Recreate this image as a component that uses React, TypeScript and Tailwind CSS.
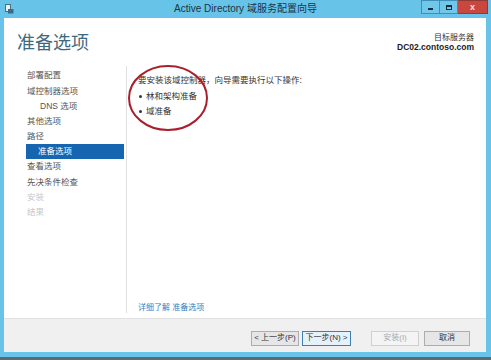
import React from "react";

const navItems: { label: string; indent?: boolean; selected?: boolean; disabled?: boolean }[] = [
  { label: "部署配置" },
  { label: "域控制器选项" },
  { label: "DNS 选项", indent: true },
  { label: "其他选项" },
  { label: "路径" },
  { label: "准备选项", selected: true },
  { label: "查看选项" },
  { label: "先决条件检查" },
  { label: "安装", disabled: true },
  { label: "结果", disabled: true },
];

export default function App() {
  const font = { fontFamily: '"Liberation Sans", "Noto Sans CJK SC", sans-serif' };
  return (
    <div className="w-[491px] h-[360px] bg-[#67c3e8] flex flex-col overflow-hidden" style={font}>
      {/* Title bar */}
      <div className="relative h-[18px] shrink-0 flex items-center justify-center">
        <div className="absolute left-[5px] top-[4px] w-[9px] h-[10px]">
          <svg width="9" height="10" viewBox="0 0 9 10">
            <rect x="0.5" y="0.5" width="5" height="7" fill="#e8f4fa" stroke="#4a6f85" strokeWidth="1" />
            <rect x="3" y="5" width="5.5" height="4.5" fill="#3f6a85" />
          </svg>
        </div>
        <span className="text-[10px] text-[#1b3446] leading-none">Active Directory 域服务配置向导</span>
        <div className="absolute right-[3px] top-0 flex h-[14px]">
          <div className="w-[19px] h-[14px] bg-[#6fc7eb] border border-[#3d8fb4] flex items-end justify-center pb-[3px]">
            <div className="w-[5px] h-[2px] bg-[#1c2b36]" />
          </div>
          <div className="w-[18px] h-[14px] bg-[#6fc7eb] border-y border-r border-[#3d8fb4] flex items-center justify-center">
            <div className="w-[6px] h-[5px] border border-[#1c2b36] border-t-2" />
          </div>
          <div className="w-[30px] h-[14px] bg-[#c9473f] border-y border-r border-[#8e3a36] flex items-center justify-center">
            <span className="text-[9px] font-bold text-[#f6e3e0] leading-none">x</span>
          </div>
        </div>
      </div>

      {/* Body */}
      <div className="flex-1 flex flex-col ml-[4px] mr-[5px] bg-white">
        <div className="h-[300px] flex flex-col">
          {/* Header */}
          <div className="flex justify-between items-start px-[13px] pt-[14px] h-[50px]">
            <div className="text-[18px] text-[#3f6a7e] leading-none mt-[2px]">准备选项</div>
            <div className="flex flex-col items-end mr-[-1px] mt-[1px]">
              <span className="text-[8px] text-[#333] leading-[9px]">目标服务器</span>
              <span className="text-[8.5px] font-bold text-[#222] leading-[10px]">DC02.contoso.com</span>
            </div>
          </div>
          <div className="flex flex-1">
            {/* Nav */}
            <div className="w-[122px] shrink-0 flex flex-col pl-[22px] mb-[5px]">
              <div className="flex flex-col">
                {navItems.map((it) => (
                  <div
                    key={it.label}
                    className={`h-[15.2px] flex items-center text-[8.5px] leading-none ${
                      it.indent ? "pl-[14px]" : "pl-[1px]"
                    } ${
                      it.selected
                        ? "bg-[#1565b0] text-white pl-[12px] mr-[2px]"
                        : it.disabled
                        ? "text-[#c8c8c8]"
                        : "text-[#555]"
                    }`}
                  >
                    {it.label}
                  </div>
                ))}
              </div>
            </div>
            <div className="w-px bg-[#e0e0e0] mb-[5px] mt-[-2px]" />
            {/* Content */}
            <div className="flex-1 flex flex-col pl-[11px] pr-[10px] pb-[6px] relative">
              <div className="text-[8.5px] text-[#333] leading-none pt-[8px]">要安装该域控制器，向导需要执行以下操作:</div>
              <div className="flex flex-col mt-[7px] gap-[6px]">
                <div className="flex items-center text-[8.5px] text-[#333] leading-[9px]">
                  <span className="w-[3px] h-[3px] bg-[#333] rounded-full mr-[4px] ml-[1px]" />林和架构准备
                </div>
                <div className="flex items-center text-[8.5px] text-[#333] leading-[9px]">
                  <span className="w-[3px] h-[3px] bg-[#333] rounded-full mr-[4px] ml-[1px]" />域准备
                </div>
              </div>
              <div className="flex-1" />
              <div className="text-[8px] text-[#3c7bbf] leading-none">详细了解 准备选项</div>
              {/* Red annotation ellipse */}
              <svg className="absolute left-[0px] top-[-4px]" width="84" height="70" viewBox="0 0 84 70">
                <ellipse cx="41" cy="34" rx="39" ry="32" fill="none" stroke="#a8202e" strokeWidth="2" />
              </svg>
            </div>
          </div>
        </div>
        {/* Footer */}
        <div className="flex-1 bg-[#f0f0f0] border-t border-[#e2e2e2] flex items-center justify-end pr-[16px] pt-[5px]">
          <div className="flex gap-[3px] mr-[20px]">
            <button className="w-[48px] h-[15px] bg-[#e6e6e6] border border-[#adadad] text-[8px] text-[#333] leading-none">&lt; 上一步(P)</button>
            <button className="w-[49px] h-[15px] bg-[#e5f1fb] border border-[#3c7fb1] text-[8px] text-[#333] leading-none">下一步(N) &gt;</button>
          </div>
          <div className="flex gap-[5px]">
            <button className="w-[48px] h-[15px] bg-[#f4f4f4] border border-[#d0d0d0] text-[8px] text-[#aaa] leading-none">安装(I)</button>
            <button className="w-[46px] h-[15px] bg-[#e6e6e6] border border-[#adadad] text-[8px] text-[#333] leading-none">取消</button>
          </div>
        </div>
      </div>
      <div className="h-[5px] shrink-0" />
      <div className="h-[3px] shrink-0 bg-[#5c6a72]" />
    </div>
  );
}
